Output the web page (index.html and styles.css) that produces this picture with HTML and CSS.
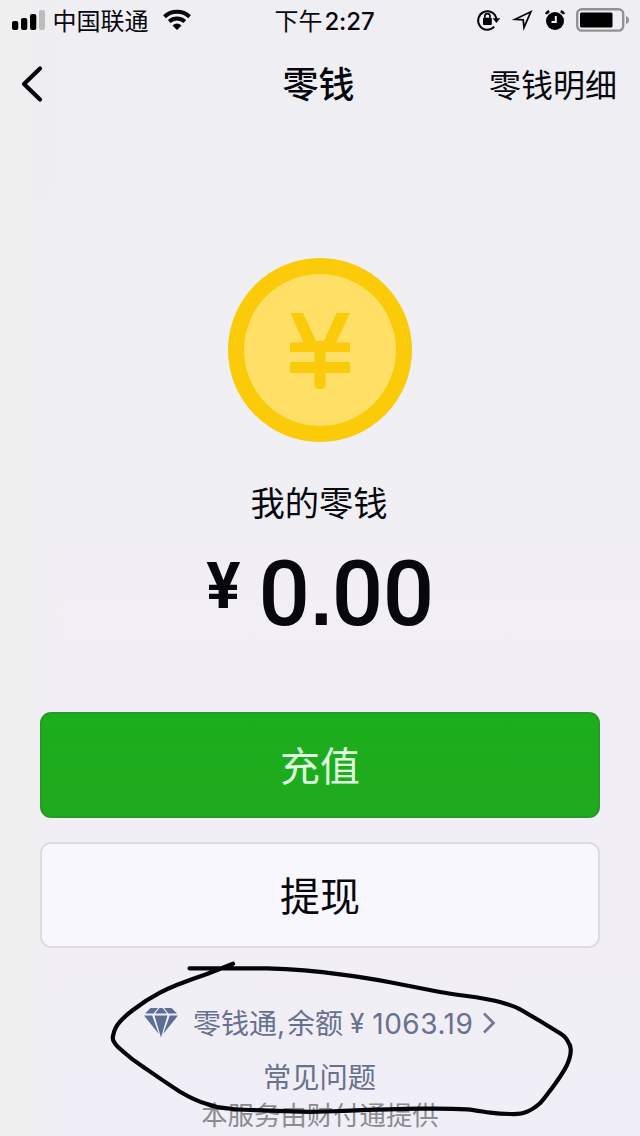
FILE: index.html
```
<!DOCTYPE html>
<html lang="zh-CN">
<head>
<meta charset="utf-8">
<title>零钱</title>
<link rel="stylesheet" href="styles.css">
</head>
<body>
<div class="screen">
  <header class="status">
    <div class="status-left">
      <svg class="signal" width="34" height="20" viewBox="0 0 34 20">
        <rect x="0" y="11" width="6.3" height="9" rx="2"/>
        <rect x="9" y="8" width="6.3" height="12" rx="2"/>
        <rect x="18" y="4" width="6.3" height="16" rx="2"/>
        <rect class="signal-off" x="27" y="0" width="6" height="20" rx="2"/>
      </svg>
      <span class="carrier">中国联通</span>
      <svg class="wifi" width="28" height="20" viewBox="0 0 28 20">
        <path class="wifi-arc" d="M1.5 6.8C8.5 .2 19.5 .2 26.5 6.8"/>
        <path class="wifi-arc" d="M6.2 11.6C10.8 7.6 17.2 7.6 21.8 11.6"/>
        <path d="M9.5 15.4Q14 11.7 18.5 15.4L14 20Z"/>
      </svg>
    </div>
    <div class="time">下午<span class="clock">2:27</span></div>
    <div class="status-right">
      <svg width="23" height="22" viewBox="0 0 23 22">
        <path class="thin" d="M17.2 17.600A9.2 9.2 0 1 1 19.400 10"/>
        <path d="M15.600 9.2H23.200L19.400 14Z"/>
        <rect x="6" y="8.800" width="8.8" height="7.200" rx="1"/>
        <path class="lock-loop" d="M7.8 10V7.500a2.6 2.8 0 0 1 5.2 0v2.500"/>
      </svg>
      <svg class="locate" width="20" height="20" viewBox="0 0 20 20">
        <path class="arrow" d="M2.200 9.300 17.800 1.800 11 17.500 10.200 9.800Z"/>
      </svg>
      <svg class="alarm" width="20" height="21" viewBox="0 0 20 21">
        <circle cx="10" cy="11" r="9"/>
        <path class="ears" d="M.9 4Q2 2 4.3 1.2M19.1 4Q18 2 15.700 1.2"/>
        <path class="hands" d="M10.8 6V12H6.5"/>
      </svg>
      <svg class="battery" width="54" height="24" viewBox="0 0 54 24">
        <rect class="cell" x="1.2" y="1.2" width="46" height="21.4" rx="4.5"/>
        <rect x="4" y="4.4" width="32.5" height="15" rx="1.5"/>
        <path class="cap" d="M50 8Q53 9 53 12T50 16Z"/>
      </svg>
    </div>
  </header>

  <nav class="nav">
    <svg class="back" width="22" height="36" viewBox="0 0 22 36"><path d="M19 2.5 3 18 19 33.5"/></svg>
    <h1 class="title">零钱</h1>
    <span class="detail">零钱明细</span>
  </nav>

  <main class="main">
    <svg class="coin" width="184" height="184" viewBox="0 0 184 184">
      <circle class="coin-rim" cx="92" cy="92" r="92"/>
      <circle class="coin-face" cx="92" cy="92" r="76"/>
      <path class="coin-mark" d="M62.500 55H75L88 83H96L108.500 55H122L108 84.500H122V94H97.500V104H122V115H97.500V128Q97 131 92 131T86.500 128V115H62V104H86.500V94H62V84.500H75.500Z"/>
    </svg>
    <p class="label">我的零钱</p>
    <p class="balance"><span class="yen">¥</span><span class="amount">0<span class="point">.</span>00</span></p>
    <button class="btn btn-primary">充值</button>
    <button class="btn btn-plain">提现</button>
  </main>

  <footer class="footer">
    <div class="fund">
      <svg class="gem" width="34" height="30" viewBox="0 0 34 30">
        <path d="M6.500 0H14L9.500 5.500H1ZM15.500 0H18.500L23 5.500H11ZM20 0H27.500L33 5.500H24.500ZM0 7.500H8.200L14.800 26ZM10.500 7.500H23.500L17 29.500ZM25.800 7.500H34L19.200 26Z"/>
      </svg>
      <span class="fund-name">零钱通<span class="comma">,</span>余额</span>
      <span class="fund-yen">¥</span>
      <span class="fund-sum">1063.19</span>
      <svg class="more" width="14" height="22" viewBox="0 0 14 22"><path d="M2 1.500 11.500 11 2 20.500"/></svg>
    </div>
    <p class="faq">常见问题</p>
    <p class="provider">本服务由财付通提供</p>
    <svg class="scribble" width="480" height="170" viewBox="0 0 480 170">
      <path d="M89.500 8.300H167C193 9 217 11 240 14.300C258 16.500 274 19 290 22.300L340 32C362 36 382 37 400 42C409 44.500 414 46 420 49.300L440 61L460 73.300Q466 77 468 81.700Q471 86 470.700 90Q471 96 467 105C463 113 458 120 453 126.700C449 132 445 138 440 143.300Q433 149.500 427 151.700C422 154 415 154.300 410 154C403 154 396 153.500 390 152.700C382 151.500 375 150 367 149.300C352 148.500 336 148.500 320 148.700C293 149 267 150 240 151C227 151.700 213 151.900 200 151.700L150 150C142 150 134 149.500 127 148.300Q116 147.500 107 144C98 141.500 89 137 80 131.700C67 123.500 55 115 43 106.700Q32 99.500 23.300 91.700Q15 85 14 81.700Q12 79 13.300 75Q14.500 68 20 61.700Q25 56 33 50Q46 40 60 32.700Q68 28.500 76.700 25Q92 19 107 14L133 3.700"/>
    </svg>
  </footer>
</div>
</body>
</html>
```
FILE: styles.css
```
* { box-sizing: border-box; margin: 0; }

body {
  font-family: Inter, "Noto Sans CJK SC", sans-serif;
  color: #08070d;
}

.screen {
  width: 640px;
  height: 1136px;
  overflow: hidden;
  display: flex;
  flex-direction: column;
  background:
    linear-gradient(90deg, #efefef 0, #efefef 24px, rgba(239, 239, 239, 0) 60px),
    linear-gradient(180deg, #eeeef3 0, #f0eff4 45%, #f2eef5 58%, #f0eef6 100%);
}

svg { display: block; flex: none; overflow: visible; }

.status {
  height: 40px;
  display: grid;
  grid-template-columns: 1fr auto 1fr;
  align-items: center;
  padding: 0 10px 0 12px;
}
.status-left, .status-right { display: flex; align-items: center; }
.status-right { justify-content: flex-end; }
.carrier { font-size: 24px; line-height: 36px; padding-top: 4px; margin-left: 6.5px; }
.wifi { margin-left: 14.5px; }
.signal-off { fill: #bdbdc0; }
.wifi-arc { fill: none; stroke: #08070d; stroke-width: 4; }
.time { font-size: 24px; line-height: 36px; padding: 3px 0 0 7px; white-space: nowrap; }
.clock { font-weight: 500; letter-spacing: -0.1px; margin-left: 2px; }
.thin { fill: none; stroke: #08070d; stroke-width: 2; }
.lock-loop { fill: none; stroke: #08070d; stroke-width: 1.7; }
.locate { margin-left: 13px; }
.arrow { fill: none; stroke: #08070d; stroke-width: 1.8; }
.alarm { margin-left: 12px; }
.ears { fill: none; stroke: #08070d; stroke-width: 2.5; }
.hands { fill: none; stroke: #eeeef3; stroke-width: 2; }
.battery { margin-left: 11px; }
.cell { fill: none; stroke: #929296; stroke-width: 2.4; }
.cap { fill: #929296; }

.nav {
  height: 88px;
  display: grid;
  grid-template-columns: 1fr auto 1fr;
  align-items: center;
  padding: 0 23px 0 21px;
}
.back path { fill: none; stroke: #08070d; stroke-width: 4.2; stroke-linecap: round; stroke-linejoin: round; }
.title { font-size: 36px; font-weight: 500; line-height: 84px; padding: 2px 1px 0 0; }
.detail { font-size: 32px; line-height: 84px; padding-top: 4px; justify-self: end; }

.main {
  display: flex;
  flex-direction: column;
  align-items: center;
  padding: 130px 40px 0;
}
.coin-rim { fill: #fbca08; }
.coin-face { fill: #ffdf66; }
.coin-mark { fill: #fbca08; }
.label { font-size: 34.3px; line-height: 50px; margin-top: 37px; padding-right: 2px; }
.balance {
  display: flex;
  align-items: flex-start;
  height: 183px;
  padding-top: 12px;
  font-family: Roboto, sans-serif;
  font-weight: 500;
}
.yen { font-size: 64px; line-height: 92px; margin-right: 18px; font-weight: 700; }
.amount { font-size: 90.5px; line-height: 106px; letter-spacing: -0.4px; }
.point { font-family: "Liberation Sans", sans-serif; font-size: 78px; font-weight: 700; line-height: 1; margin: 0 0 0 1px; }
.btn {
  width: 560px;
  height: 106px;
  border-radius: 11px;
  font-family: inherit;
  font-size: 40px;
  line-height: 60px;
  padding: 4px 0 0;
  flex: none;
}
.btn-primary { background: linear-gradient(#1bae1d, #20aa1d); border: 2px solid #279927; color: #dfffe0; }
.btn-plain { background: #f8f7fe; border: 2px solid #dddce4; color: #08070d; margin-top: 24px; }

.footer {
  position: relative;
  display: flex;
  flex-direction: column;
  align-items: center;
  padding-top: 55px;
  color: #68718d;
}
.fund { display: flex; align-items: center; height: 40px; width: 352px; white-space: nowrap; }
.gem { fill: #5c6d96; }
.fund-name { flex: none; font-size: 28px; line-height: 38px; padding-top: 2px; margin-left: 15px; }
.comma { margin-right: 2px; }
.fund-yen { font-family: Roboto, sans-serif; font-size: 27px; line-height: 38px; padding-top: 2px; margin-left: 7px; }
.fund-sum { font-size: 28px; line-height: 38px; padding-top: 2px; margin-left: 8px; letter-spacing: 0.5px; }
.more { margin-left: 9px; }
.more path { fill: none; stroke: #737b92; stroke-width: 2.7; }
.faq { font-size: 28.3px; line-height: 40px; margin-top: 15px; padding-right: 1px; }
.provider { font-size: 26.4px; line-height: 36px; margin-top: -1px; color: #8b8b90; white-space: nowrap; }
.scribble { position: absolute; left: 100px; top: 12px; }
.scribble path { fill: none; stroke: #050509; stroke-width: 4.2; stroke-linecap: round; }
```
